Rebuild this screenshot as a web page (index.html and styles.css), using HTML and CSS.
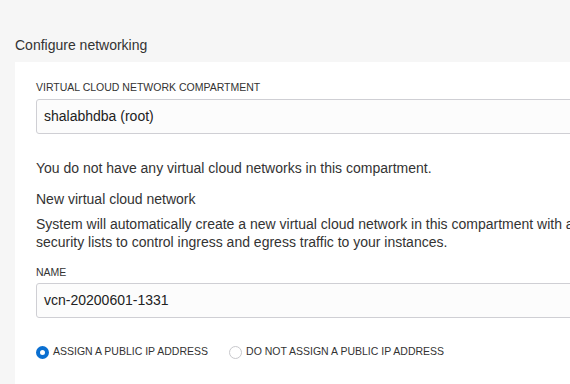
FILE: index.html
```html
<!DOCTYPE html>
<html>
<head>
<meta charset="utf-8">
<link rel="stylesheet" href="styles.css">
</head>
<body>
<div class="page">
  <h2 class="title">Configure networking</h2>
  <div class="card">
    <label class="field-label">VIRTUAL CLOUD NETWORK COMPARTMENT</label>
    <div class="input">shalabhdba (root)</div>
    <p class="msg">You do not have any virtual cloud networks in this compartment.</p>
    <p class="sub">New virtual cloud network</p>
    <p class="desc">System will automatically create a new virtual cloud network in this compartment with a<br>security lists to control ingress and egress traffic to your instances.</p>
    <label class="field-label name-label">NAME</label>
    <div class="input">vcn-20200601-1331</div>
    <div class="radios">
      <div class="radio-item"><span class="radio checked"></span><span class="radio-text">ASSIGN A PUBLIC IP ADDRESS</span></div>
      <div class="radio-item"><span class="radio"></span><span class="radio-text">DO NOT ASSIGN A PUBLIC IP ADDRESS</span></div>
    </div>
  </div>
</div>
</body>
</html>
```
FILE: styles.css
```css
html, body {
  margin: 0;
  padding: 0;
  background: #f6f6f6;
  overflow: hidden;
  width: 570px;
  height: 384px;
}
body {
  font-family: "Liberation Sans", Arial, sans-serif;
  color: #333;
}
.page {
  padding: 36px 0 0 15px;
  height: 384px;
  box-sizing: border-box;
  display: flex;
  flex-direction: column;
}
.title {
  margin: 0;
  font-size: 14px;
  font-weight: normal;
  line-height: 18px;
  color: #333;
}
.card {
  margin-top: 8px;
  background: #fff;
  width: 640px;
  flex: 1;
  padding: 18px 21px 0 21px;
  box-sizing: border-box;
  overflow: hidden;
}
.field-label {
  display: block;
  font-size: 10.5px;
  line-height: 14px;
  color: #333;
}
.input {
  margin-top: 5px;
  height: 35px;
  box-sizing: border-box;
  border: 1px solid #cfcfd4;
  border-radius: 3px;
  background: #fcfcfc;
  font-size: 14px;
  line-height: 33px;
  padding-left: 7px;
  color: #222;
}
.msg {
  margin: 25px 0 0;
  font-size: 14px;
  line-height: 18px;
}
.sub {
  margin: 13px 0 0;
  font-size: 14px;
  line-height: 18px;
}
.desc {
  margin: 7px 0 0;
  font-size: 14px;
  line-height: 18px;
  white-space: nowrap;
}
.name-label {
  margin-top: 14px;
}
.name-label + .input {
  margin-top: 4px;
}
.radios {
  margin-top: 25px;
  display: flex;
  gap: 21px;
  align-items: center;
}
.radio-item {
  display: flex;
  align-items: center;
  gap: 4px;
}
.radio {
  width: 13px;
  height: 13px;
  box-sizing: border-box;
  border-radius: 50%;
  border: 1px solid #c8c8cc;
  background: #fff;
  margin-top: 3px;
}
.radio.checked {
  border: 4px solid #0a6fd1;
  background: #fff;
}
.radio-text {
  font-size: 10.5px;
  line-height: 14px;
  color: #333;
}
```
